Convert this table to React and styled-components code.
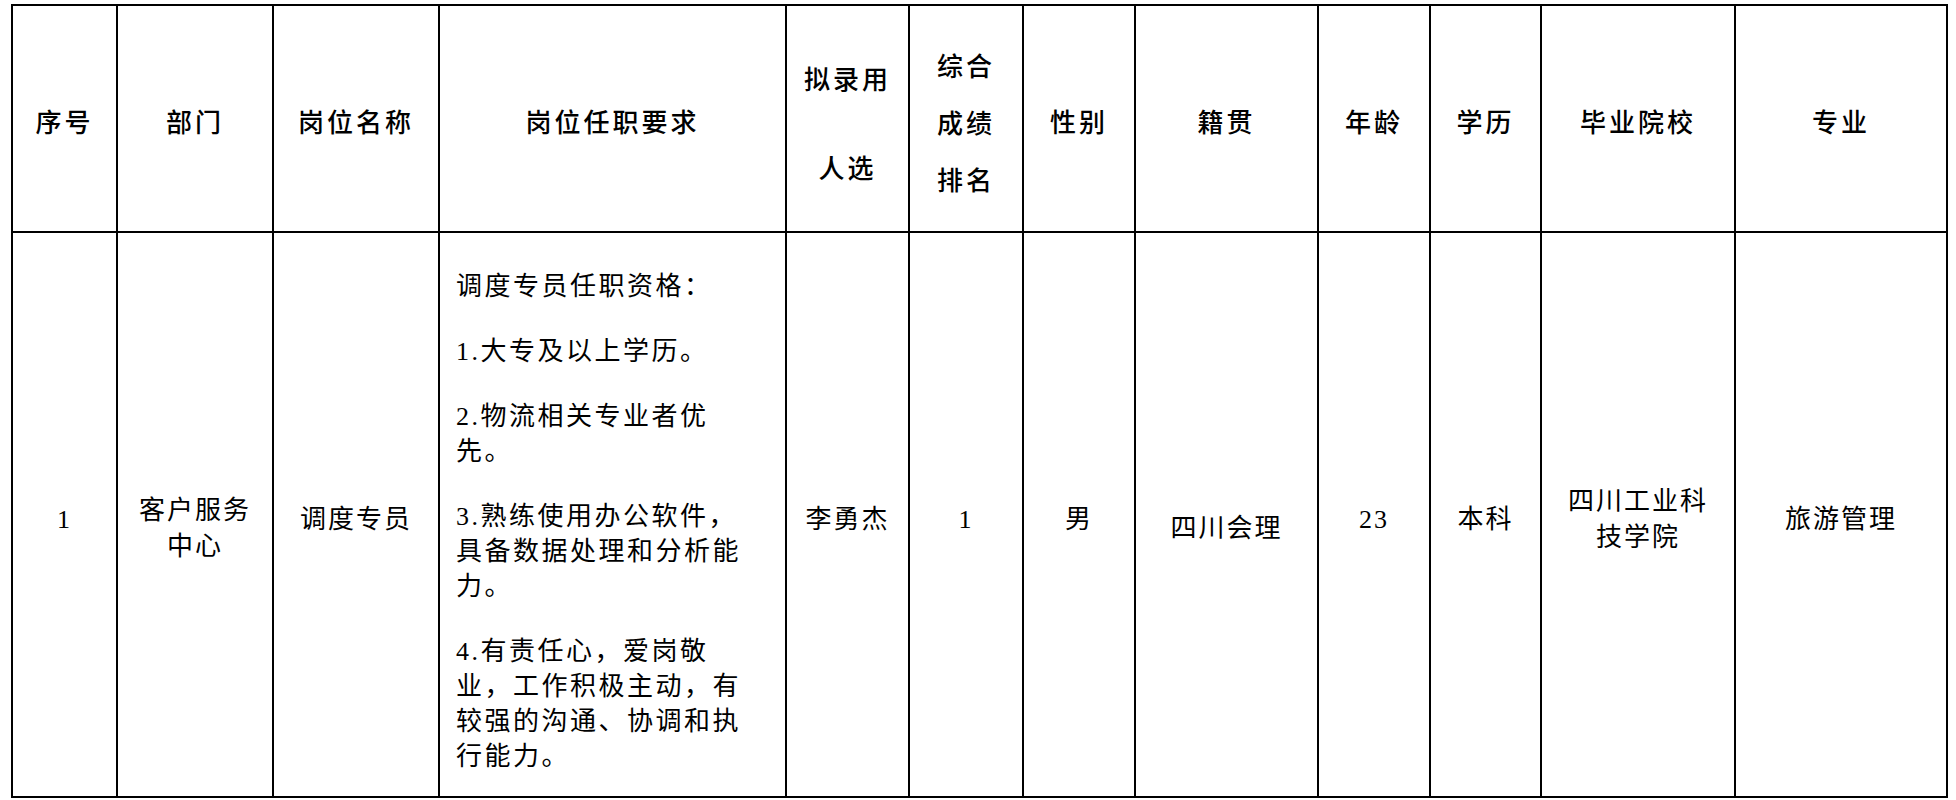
import styled, { createGlobalStyle } from "styled-components";

const GlobalStyle = createGlobalStyle`
  body {
    margin: 0;
    background: #fff;
  }
`;

const Page = styled.div`
  padding: 4px 0 0 11px;
`;

const Sheet = styled.table`
  width: 1937px;
  border-collapse: collapse;
  table-layout: fixed;
  color: #000;
  font-family: "Liberation Serif", "Noto Sans CJK SC", serif;
`;

const Row = styled.tr`
  height: ${(p) => p.$h}px;
`;

const HeadCell = styled.th`
  padding: ${(p) => p.$drop || 10}px 2px 0;
  border: 2px solid #000;
  font-size: 26px;
  font-weight: 500;
  letter-spacing: 3px;
  line-height: ${(p) => p.$lh || 36}px;
  text-align: center;
  vertical-align: middle;
`;

const Cell = styled.td`
  padding: ${(p) => p.$drop || 10}px 2px 0;
  border: 2px solid #000;
  font-size: 26px;
  letter-spacing: 2px;
  line-height: 36px;
  text-align: center;
  vertical-align: middle;
`;

const DutyCell = styled(Cell)`
  padding-left: 16px;
  text-align: left;
  white-space: nowrap;
  letter-spacing: 2.5px;
`;

const Para = styled.p`
  margin: 0 0 30px;
  line-height: 35px;

  &:last-child {
    margin-bottom: 0;
  }
`;

const COLS = [105, 156, 166, 347, 123, 114, 112, 183, 112, 111, 194, 212];

const DUTIES = [
  ["调度专员任职资格："],
  ["1.大专及以上学历。"],
  ["2.物流相关专业者优", "先。"],
  ["3.熟练使用办公软件，", "具备数据处理和分析能", "力。"],
  ["4.有责任心，爱岗敬", "业，工作积极主动，有", "较强的沟通、协调和执", "行能力。"],
];

function Lines({ items }) {
  return items.map((t, i) => (
    <span key={i}>
      {i > 0 && <br />}
      {t}
    </span>
  ));
}

export default function App() {
  return (
    <Page>
      <GlobalStyle />
      <Sheet>
        <colgroup>
          {COLS.map((w, i) => (
            <col key={i} style={{ width: w }} />
          ))}
        </colgroup>
        <thead>
          <Row $h={227}>
            <HeadCell>序号</HeadCell>
            <HeadCell>部门</HeadCell>
            <HeadCell>岗位名称</HeadCell>
            <HeadCell>岗位任职要求</HeadCell>
            <HeadCell $lh={89} $drop={12}>
              <Lines items={["拟录用", "人选"]} />
            </HeadCell>
            <HeadCell $lh={57} $drop={12}>
              <Lines items={["综合", "成绩", "排名"]} />
            </HeadCell>
            <HeadCell>性别</HeadCell>
            <HeadCell>籍贯</HeadCell>
            <HeadCell>年龄</HeadCell>
            <HeadCell>学历</HeadCell>
            <HeadCell>毕业院校</HeadCell>
            <HeadCell>专业</HeadCell>
          </Row>
        </thead>
        <tbody>
          <Row $h={565}>
            <Cell>1</Cell>
            <Cell $drop={28}>
              <Lines items={["客户服务", "中心"]} />
            </Cell>
            <Cell>调度专员</Cell>
            <DutyCell $drop={14}>
              {DUTIES.map((p, i) => (
                <Para key={i}>
                  <Lines items={p} />
                </Para>
              ))}
            </DutyCell>
            <Cell>李勇杰</Cell>
            <Cell>1</Cell>
            <Cell>男</Cell>
            <Cell $drop={28}>四川会理</Cell>
            <Cell>23</Cell>
            <Cell>本科</Cell>
            <Cell>
              <Lines items={["四川工业科", "技学院"]} />
            </Cell>
            <Cell>旅游管理</Cell>
          </Row>
        </tbody>
      </Sheet>
    </Page>
  );
}
